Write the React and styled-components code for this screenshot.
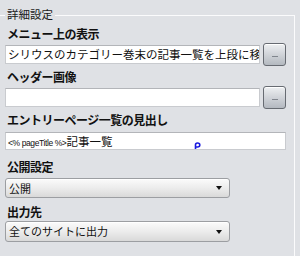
import React from 'react';
import styled, { createGlobalStyle } from 'styled-components';

const GlobalStyle = createGlobalStyle`
  html, body {
    margin: 0;
    padding: 0;
    background: #dfe1e5;
  }
  body {
    width: 300px;
    height: 256px;
    overflow: hidden;
    font-family: "Noto Sans CJK JP", "Noto Sans", sans-serif;
    color: #111;
  }
`;

const Fieldset = styled.fieldset`
  margin: 7px 0 0 0;
  width: 295px;
  box-sizing: border-box;
  padding: 0 8px 20px 5px;
  border: 1px solid #fbfbfc;
  border-left: none;
  border-bottom: none;
  min-width: 0;
`;

const Legend = styled.legend`
  padding: 0 2px;
  font-size: 11.5px;
  line-height: 15px;
  height: 16px;
  color: #1a1a1a;
`;

const Label = styled.div`
  height: 16px;
  line-height: 16px;
  font-size: 12px;
  font-weight: 700;
  letter-spacing: -0.5px;
  white-space: nowrap;
  margin-top: ${p => p.$mt || 0}px;
  margin-bottom: ${p => p.$mb || 0}px;
  padding-left: 2px;
`;

const Row = styled.div`
  display: flex;
  align-items: center;
  gap: 3px;
  height: 23px;
`;

const TextBox = styled.div`
  position: relative;
  box-sizing: border-box;
  height: ${p => p.$h || 19}px;
  width: ${p => (p.$full ? '100%' : '255px')};
  flex: ${p => (p.$full ? '1' : '0 0 255px')};
  background: #fff;
  border: 1px solid #c9cbcf;
  border-top-color: #b3b5b9;
  padding: 0 2px;
  font-size: 11.5px;
  line-height: ${p => (p.$h || 19) - 2}px;
  white-space: nowrap;
  overflow: hidden;
`;

const Small = styled.span`
  font-family: "Liberation Sans", Arial, sans-serif;
  font-size: 8.5px;
  letter-spacing: -0.4px;
`;

const Cursor = styled.svg`
  position: absolute;
  left: 188px;
  top: 9px;
`;

const PickButton = styled.button`
  flex: 0 0 23px;
  width: 23px;
  height: 23px;
  padding: 0;
  box-sizing: border-box;
  border: 1px solid #676b72;
  border-radius: 3px;
  background: linear-gradient(#eef0f2 0%, #d3d6db 45%, #b4b9c0 100%);
  box-shadow: inset 0 1px 0 #fff;
  display: flex;
  align-items: center;
  justify-content: center;
  &::after {
    content: '';
    display: block;
    width: 6px;
    height: 1px;
    margin-top: 3px;
    background: #80858d;
  }
`;

const Select = styled.div`
  position: relative;
  box-sizing: border-box;
  width: 225px;
  height: ${p => p.$h || 20}px;
  border: 1px solid #9c9ea2;
  border-radius: 3px;
  background: linear-gradient(#fbfbfb 0%, #ececec 50%, #d9d9d9 100%);
  box-shadow: inset 0 1px 0 #fff;
  font-size: 11px;
  line-height: ${p => (p.$h || 20) - 2}px;
  padding-left: 3px;
  white-space: nowrap;
  &::after {
    content: '';
    position: absolute;
    right: 7px;
    top: 50%;
    margin-top: -2px;
    border-left: 3.5px solid transparent;
    border-right: 3.5px solid transparent;
    border-top: 4px solid #111;
  }
`;

const App = () => {
  return (
    <>
      <GlobalStyle />
      <Fieldset>
        <Legend>詳細設定</Legend>
        <Label $mt={3} $mb={1}>メニュー上の表示</Label>
        <Row>
          <TextBox>シリウスのカテゴリー巻末の記事一覧を上段に移動</TextBox>
          <PickButton aria-label="選択" />
        </Row>
        <Label $mt={3} $mb={1}>ヘッダー画像</Label>
        <Row>
          <TextBox />
          <PickButton aria-label="選択" />
        </Row>
        <Label $mt={3} $mb={4}>エントリーページ一覧の見出し</Label>
        <TextBox $full $h={18}>
          <Small>&lt;% pageTitle %&gt;</Small>記事一覧
          <Cursor width="7" height="9" viewBox="0 0 7 9">
            <path d="M1.5 8.5 V3 Q1.5 1 3.5 1 Q5.8 1 5.8 3 Q5.8 5 3.5 5 H1.5" fill="none" stroke="#1a1adf" strokeWidth="1.6" />
          </Cursor>
        </TextBox>
        <Label $mt={9} $mb={3}>公開設定</Label>
        <Select>公開</Select>
        <Label $mt={6} $mb={1}>出力先</Label>
        <Select $h={21}>全てのサイトに出力</Select>
      </Fieldset>
    </>
  );
};

export default App;
